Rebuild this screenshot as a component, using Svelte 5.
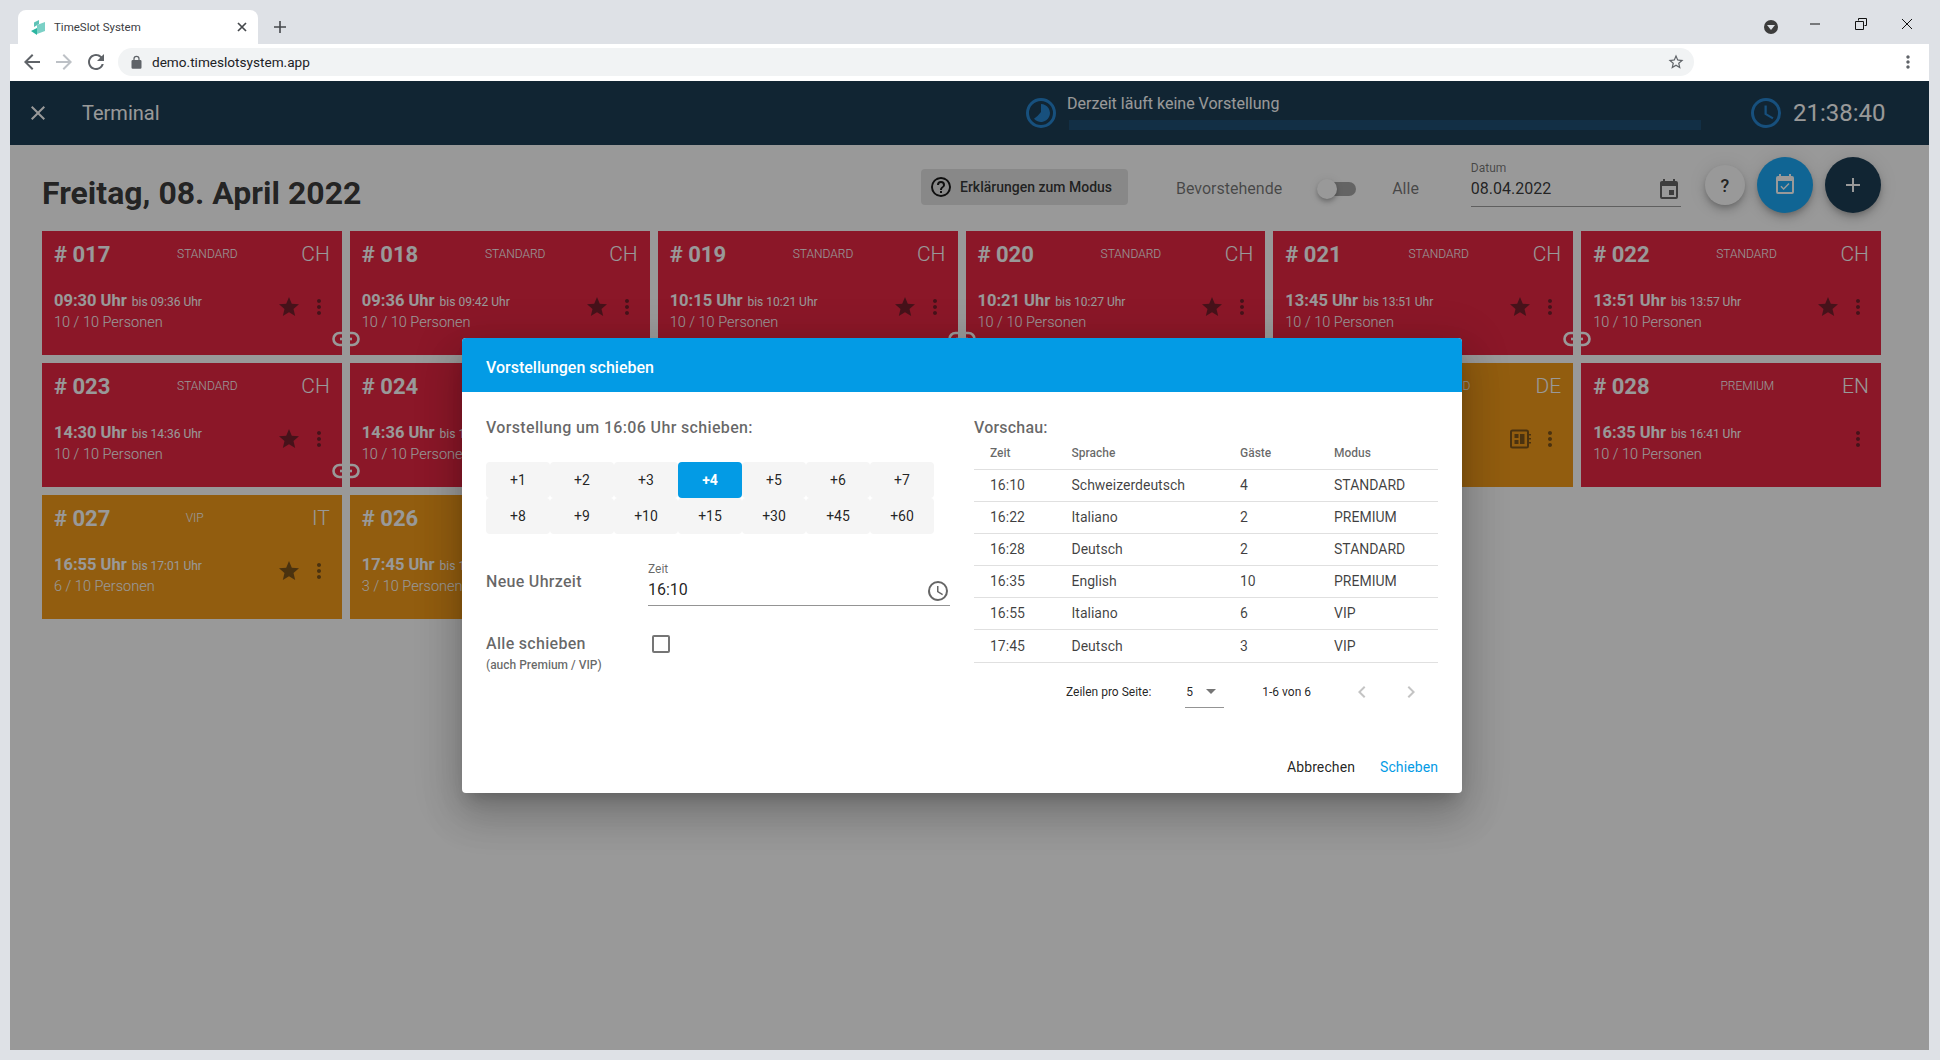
<script>
	const P = {
		star: 'M12 17.27L18.18 21l-1.64-7.03L22 9.24l-7.19-.61L12 2 9.19 8.63 2 9.24l5.46 4.73L5.82 21z',
		dots: 'M12 8c1.1 0 2-.9 2-2s-.9-2-2-2-2 .9-2 2 .9 2 2 2zm0 2c-1.1 0-2 .9-2 2s.9 2 2 2 2-.9 2-2-.9-2-2-2zm0 6c-1.1 0-2 .9-2 2s.9 2 2 2 2-.9 2-2-.9-2-2-2z',
		close: 'M19 6.41L17.59 5 12 10.59 6.41 5 5 6.41 10.59 12 5 17.59 6.41 19 12 13.41 17.59 19 19 17.59 13.41 12z',
		plus: 'M19 13h-6v6h-2v-6H5v-2h6V5h2v6h6v2z',
		calendar: 'M19 19H5V8h14m-3-7v2H8V1H6v2H5c-1.11 0-2 .89-2 2v14a2 2 0 0 0 2 2h14a2 2 0 0 0 2-2V5a2 2 0 0 0-2-2h-1V1m-1 11h-5v5h5v-5z',
		calCheck: 'M19 19H5V8h14m0-5h-1V1h-2v2H8V1H6v2H5a2 2 0 0 0-2 2v14a2 2 0 0 0 2 2h14a2 2 0 0 0 2-2V5a2 2 0 0 0-2-2m-2.47 8.06L15.47 10l-4.88 4.88-2.12-2.12-1.06 1.06L10.59 17l5.94-5.94z',
		clock: 'M12 20a8 8 0 0 0 8-8 8 8 0 0 0-8-8 8 8 0 0 0-8 8 8 8 0 0 0 8 8m0-18a10 10 0 0 1 10 10 10 10 0 0 1-10 10C6.47 22 2 17.5 2 12A10 10 0 0 1 12 2m.5 5v5.25l4.5 2.67-.75 1.23L11 13V7h1.5z',
		help: 'M11 18h2v-2h-2v2m1-16A10 10 0 0 0 2 12a10 10 0 0 0 10 10 10 10 0 0 0 10-10A10 10 0 0 0 12 2m0 18c-4.41 0-8-3.59-8-8s3.59-8 8-8 8 3.59 8 8-3.59 8-8 8m0-14a4 4 0 0 0-4 4h2a2 2 0 0 1 2-2 2 2 0 0 1 2 2c0 2-3 1.75-3 5h2c0-2.25 3-2.5 3-5a4 4 0 0 0-4-4z'
	};

	const cards = [
		{ no: '017', mode: 'STANDARD', lang: 'CH', from: '09:30', to: '09:36', count: 10, star: true, link: true },
		{ no: '018', mode: 'STANDARD', lang: 'CH', from: '09:36', to: '09:42', count: 10, star: true },
		{ no: '019', mode: 'STANDARD', lang: 'CH', from: '10:15', to: '10:21', count: 10, star: true, link: true },
		{ no: '020', mode: 'STANDARD', lang: 'CH', from: '10:21', to: '10:27', count: 10, star: true },
		{ no: '021', mode: 'STANDARD', lang: 'CH', from: '13:45', to: '13:51', count: 10, star: true, link: true },
		{ no: '022', mode: 'STANDARD', lang: 'CH', from: '13:51', to: '13:57', count: 10, star: true },
		{ no: '023', mode: 'STANDARD', lang: 'CH', from: '14:30', to: '14:36', count: 10, star: true, link: true },
		{ no: '024', mode: 'STANDARD', lang: 'CH', from: '14:36', to: '14:42', count: 10, star: true },
		{ hidden: true, orange: true },
		{ hidden: true, orange: true },
		{ no: '025', mode: 'STANDARD', lang: 'DE', from: '16:28', to: '16:34', count: 2, orange: true, notes: true },
		{ no: '028', mode: 'PREMIUM', lang: 'EN', from: '16:35', to: '16:41', count: 10 },
		{ no: '027', mode: 'VIP', lang: 'IT', from: '16:55', to: '17:01', count: 6, star: true, orange: true },
		{ no: '026', mode: 'VIP', lang: 'DE', from: '17:45', to: '17:51', count: 3, star: true, orange: true }
	];

	const steps = [1, 2, 3, 4, 5, 6, 7, 8, 9, 10, 15, 30, 45, 60];

	const rows = [
		['16:10', 'Schweizerdeutsch', '4', 'STANDARD'],
		['16:22', 'Italiano', '2', 'PREMIUM'],
		['16:28', 'Deutsch', '2', 'STANDARD'],
		['16:35', 'English', '10', 'PREMIUM'],
		['16:55', 'Italiano', '6', 'VIP'],
		['17:45', 'Deutsch', '3', 'VIP']
	];
</script>

<div class="window">
	<div class="tabstrip">
		<div class="tab">
			<svg class="favicon" viewBox="0 0 15 15" width="15" height="15">
				<path d="M3 2.500L8 0v4L3 7z" fill="#5fc3b7" />
				<path d="M6 5l8-3v9l-8 3z" fill="#7bd0c6" />
				<path d="M0 11l6-3v7z" fill="#2bb5a0" />
			</svg>
			<span class="tab-title">TimeSlot System</span>
			<svg class="tab-close" viewBox="0 0 12 12" width="12" height="12"><path d="M2 2l8 8M10 2l-8 8" stroke="#45484c" stroke-width="1.700" fill="none" /></svg>
		</div>
		<svg class="new-tab" viewBox="0 0 12 12" width="12" height="12"><path d="M6 0v12M0 6h12" stroke="#45484c" stroke-width="1.600" fill="none" /></svg>
		<div class="winctl">
			<span class="avatar"><i></i></span>
			<svg viewBox="0 0 12 12" width="12" height="12" class="ctl-min"><path d="M1 6h10" stroke="#111" fill="none" /></svg>
			<svg viewBox="0 0 12 12" width="12" height="12" class="ctl-max"><path d="M3.500 2.500V.5h8v7h-2M.5 3.500h8v8h-8z" stroke="#111" fill="none" /></svg>
			<svg viewBox="0 0 12 12" width="12" height="12" class="ctl-x"><path d="M1 1l10 10M11 1L1 11" stroke="#111" fill="none" /></svg>
		</div>
	</div>

	<div class="toolbar">
		<svg class="nav" viewBox="0 0 24 24" width="24" height="24"><path d="M20 11H7.830l5.590-5.590L12 4l-8 8 8 8 1.410-1.410L7.830 13H20z" fill="#5f6368" /></svg>
		<svg class="nav" viewBox="0 0 24 24" width="24" height="24"><path d="M4 13h12.170l-5.590 5.590L12 20l8-8-8-8-1.410 1.410L16.170 11H4z" fill="#bdc1c6" /></svg>
		<svg class="nav" viewBox="0 0 24 24" width="24" height="24"><path d="M17.650 6.350A7.958 7.958 0 0 0 12 4c-4.420 0-7.990 3.580-7.990 8s3.570 8 7.990 8c3.730 0 6.840-2.550 7.730-6h-2.080A5.990 5.990 0 0 1 12 18c-3.310 0-6-2.690-6-6s2.690-6 6-6c1.660 0 3.140.69 4.220 1.780L13 11h7V4l-2.350 2.350z" fill="#5f6368" /></svg>
		<div class="omnibox">
			<svg viewBox="0 0 24 24" width="15" height="15"><path d="M18 8h-1V6a5 5 0 0 0-10 0v2H6a2 2 0 0 0-2 2v10a2 2 0 0 0 2 2h12a2 2 0 0 0 2-2V10a2 2 0 0 0-2-2zM9 8V6a3 3 0 0 1 6 0v2z" fill="#5f6368" /></svg>
			<span class="url">demo.timeslotsystem.app</span>
			<svg class="bookmark" viewBox="0 0 24 24" width="18" height="18"><path d="M22 9.240l-7.190-.62L12 2 9.190 8.630 2 9.240l5.460 4.730L5.820 21 12 17.270 18.180 21l-1.630-7.030L22 9.240zM12 15.400l-3.760 2.270 1-4.280-3.320-2.880 4.380-.38L12 6.100l1.710 4.040 4.380.38-3.320 2.880 1 4.280L12 15.400z" fill="#5f6368" /></svg>
		</div>
		<svg class="menu" viewBox="0 0 24 24" width="20" height="20"><path d={P.dots} fill="#5f6368" /></svg>
	</div>

	<div class="viewport">
		<header class="appbar">
			<svg class="app-close" viewBox="0 0 24 24" width="24" height="24"><path d={P.close} fill="#fff" /></svg>
			<span class="app-title">Terminal</span>
			<div class="now">
				<svg viewBox="0 0 30 30" width="30" height="30">
					<circle cx="15" cy="15" r="13.500" fill="none" stroke="#0f78cc" stroke-width="3" />
					<path d="M15 6a9 9 0 1 1-7 14.700Q12 18 15 14z" fill="#0f78cc" />
				</svg>
				<div class="now-text">
					<span>Derzeit läuft keine Vorstellung</span>
					<div class="progress"></div>
				</div>
			</div>
			<svg class="time-icon" viewBox="2 2 20 20" width="30" height="30"><path d={P.clock} fill="#0f78cc" /></svg>
			<span class="time">21:38:40</span>
		</header>

		<main class="page">
			<div class="page-head">
				<h1>Freitag, 08. April 2022</h1>
				<button class="explain">
					<svg viewBox="0 0 24 24" width="24" height="24"><path d={P.help} fill="#000" /></svg>
					Erklärungen zum Modus
				</button>
				<span class="filter first">Bevorstehende</span>
				<span class="switch"><i></i></span>
				<span class="filter">Alle</span>
				<div class="date">
					<label for="datum">Datum</label>
					<div class="date-input">
						<span id="datum">08.04.2022</span>
						<svg viewBox="0 0 24 24" width="24" height="24"><path d={P.calendar} fill="#555" /></svg>
					</div>
				</div>
				<button class="round small">?</button>
				<button class="round blue"><svg viewBox="0 0 24 24" width="24" height="24"><path d={P.calCheck} fill="#fff" /></svg></button>
				<button class="round navy"><svg viewBox="0 0 24 24" width="24" height="24"><path d={P.plus} fill="#fff" /></svg></button>
			</div>

			<div class="grid">
				{#each cards as c}
					<div class="card" class:orange={c.orange}>
						{#if !c.hidden}
							<div class="card-top">
								<span class="no"># {c.no}</span>
								<span class="mode" class:vip={c.mode === 'VIP'}>{c.mode}</span>
								<span class="lang">{c.lang}</span>
							</div>
							<div class="card-body">
								<div>
									<div class="times"><b>{c.from} Uhr</b> bis {c.to} Uhr</div>
									<div class="persons">{c.count} / 10 Personen</div>
								</div>
								<div class="card-icons">
									{#if c.star}
										<svg viewBox="0 0 24 24" width="24" height="24"><path d={P.star} fill="rgba(0,0,0,.55)" /></svg>
									{/if}
									{#if c.notes}
										<svg viewBox="0 0 24 24" width="24" height="24">
											<path d="M4.500 3.500h14a1.500 1.500 0 0 1 1.500 1.500v14a1.500 1.500 0 0 1-1.500 1.500h-14A1.500 1.500 0 0 1 3 19V5a1.500 1.500 0 0 1 1.500-1.500z" fill="none" stroke="rgba(0,0,0,.55)" stroke-width="2" />
											<path d="M6.500 7h4v4h-4zM6.500 13h4v4h-4zM12 7h4.500v10H12zM21 7h2v1.500h-2zM21 11h2v1.500h-2zM21 15h2v1.500h-2z" fill="rgba(0,0,0,.55)" />
										</svg>
									{/if}
									<svg class="card-dots" viewBox="0 0 24 24" width="24" height="24"><path d={P.dots} fill="rgba(0,0,0,.55)" /></svg>
								</div>
							</div>
						{/if}
						{#if c.link}
							<svg class="link" viewBox="0 0 30 16" width="30" height="16">
								<path d="M13 2H8.500a6 6 0 0 0 0 12H13M17 2h4.500a6 6 0 0 1 0 12H17" fill="none" stroke="#fff" stroke-width="2.600" />
								<path d="M9 8h12" fill="none" stroke="#fff" stroke-width="2.600" />
							</svg>
						{/if}
					</div>
				{/each}
			</div>
		</main>

		<div class="overlay">
			<div class="dialog">
				<div class="dialog-title">Vorstellungen schieben</div>
				<div class="dialog-body">
					<section>
						<h3>Vorstellung um 16:06 Uhr schieben:</h3>
						<div class="steps">
							{#each steps as s}
								<button class="step" class:active={s === 4}>+{s}</button>
							{/each}
						</div>
						<div class="form-row new-time">
							<span class="form-label">Neue Uhrzeit</span>
							<div class="time-field">
								<span class="field-label">Zeit</span>
								<div class="field-input">
									<span>16:10</span>
									<svg viewBox="2 2 20 20" width="20" height="20"><path d={P.clock} fill="#666" /></svg>
								</div>
							</div>
						</div>
						<div class="form-row move-all">
							<div>
								<span class="form-label">Alle schieben</span>
								<small>(auch Premium / VIP)</small>
							</div>
							<span class="checkbox"></span>
						</div>
					</section>
					<section>
						<h3 class="preview">Vorschau:</h3>
						<table>
							<colgroup>
								<col style="width:81.5px" />
								<col style="width:168.5px" />
								<col style="width:94px" />
								<col />
							</colgroup>
							<thead>
								<tr>
									<th>Zeit</th>
									<th>Sprache</th>
									<th>Gäste</th>
									<th>Modus</th>
								</tr>
							</thead>
							<tbody>
								{#each rows as r}
									<tr>
										{#each r as cell}
											<td>{cell}</td>
										{/each}
									</tr>
								{/each}
							</tbody>
						</table>
						<div class="pager">
							<span>Zeilen pro Seite:</span>
							<span class="per-page">5<i></i></span>
							<span class="range">1-6 von 6</span>
							<svg viewBox="0 0 24 24" width="24" height="24"><path d="M15.410 7.410L14 6l-6 6 6 6 1.410-1.410L10.830 12z" fill="#c4c4c4" /></svg>
							<svg class="next" viewBox="0 0 24 24" width="24" height="24"><path d="M10 6L8.590 7.410 13.170 12l-4.580 4.590L10 18l6-6z" fill="#c4c4c4" /></svg>
						</div>
					</section>
				</div>
				<div class="dialog-actions">
					<button class="text-btn">Abbrechen</button>
					<button class="text-btn primary">Schieben</button>
				</div>
			</div>
		</div>
	</div>
</div>

<style>
	:global(body) {
		margin: 0;
		font-family: Roboto, "Liberation Sans", sans-serif;
	}

	button {
		font-family: inherit;
		border: 0;
		padding: 0;
		cursor: pointer;
	}

	.window {
		width: 1940px;
		height: 1060px;
		background: #dee1e6;
		display: flex;
		flex-direction: column;
		overflow: hidden;
	}

	/* browser chrome */
	.tabstrip {
		height: 44px;
		flex: none;
		display: flex;
		align-items: flex-end;
	}

	.tab {
		margin-left: 18px;
		width: 240px;
		height: 34px;
		box-sizing: border-box;
		background: #fff;
		border-radius: 8px 8px 0 0;
		display: flex;
		align-items: center;
		padding-left: 13px;
	}

	.favicon {
		flex: none;
	}

	.tab-title {
		margin-left: 8px;
		font-size: 11.500px;
		color: #3c4043;
		flex: 1;
	}

	.tab-close {
		margin-right: 10px;
	}

	.new-tab {
		margin: 0 0 11px 16px;
	}

	.winctl {
		margin-left: auto;
		align-self: flex-start;
		display: flex;
		align-items: flex-start;
		padding-top: 18px;
	}

	.avatar {
		width: 14px;
		height: 14px;
		margin: 2px 31px 0 0;
		border-radius: 50%;
		background: #3c3c3c;
		display: flex;
		align-items: center;
		justify-content: center;
	}

	.avatar i {
		border: 4px solid transparent;
		border-top: 5px solid #dee1e6;
		border-bottom: 0;
	}

	.ctl-min {
		margin-right: 34px;
	}

	.ctl-max {
		margin-right: 34px;
	}

	.ctl-x {
		margin-right: 27px;
	}

	.toolbar {
		height: 37px;
		margin-left: 10px;
		width: 1919px;
		background: #fff;
		display: flex;
		align-items: center;
		flex: none;
		box-sizing: border-box;
		padding: 0 0 1px 10px;
	}

	.nav {
		margin-right: 8px;
	}

	.omnibox {
		margin-left: 2px;
		width: 1576px;
		height: 28px;
		box-sizing: border-box;
		background: #f1f3f4;
		border-radius: 14px;
		display: flex;
		align-items: center;
		padding: 0 9px 0 11px;
	}

	.url {
		margin-left: 8px;
		font-size: 13.600px;
		color: #202124;
		flex: 1;
	}

	.menu {
		margin-left: 204px;
	}

	/* app */
	.viewport {
		position: relative;
		margin: 0 11px 10px 10px;
		flex: 1;
		background: #fff;
		overflow: hidden;
	}

	.appbar {
		height: 64px;
		background: #042943;
		color: #fff;
		display: flex;
		align-items: center;
	}

	.app-close {
		margin-left: 16px;
	}

	.app-title {
		margin-left: 32px;
		font-size: 20px;
		font-weight: 400;
		width: 944px;
		white-space: nowrap;
	}

	.now {
		display: flex;
		align-items: center;
		gap: 13px;
		flex: none;
	}

	.now-text {
		display: flex;
		flex-direction: column;
		font-size: 16px;
		height: 40px;
	}

	.now-text span {
		line-height: 22px;
		margin-left: -2px;
	}

	.progress {
		margin-top: 5px;
		width: 632px;
		height: 10px;
		background: #073b64;
	}

	.time-icon {
		margin-left: 50px;
	}

	.time {
		margin-left: 12px;
		font-size: 24px;
	}

	.page {
		padding: 12px 48px 0 32px;
	}

	.page-head {
		display: flex;
		align-items: center;
		height: 56px;
		padding-bottom: 18px;
	}

	h1 {
		margin: 0;
		font-size: 32px;
		font-weight: 700;
		color: rgba(0, 0, 0, .87);
		line-height: 40px;
		width: 879px;
		padding-top: 16px;
		white-space: nowrap;
	}

	.explain {
		width: 207px;
		height: 36px;
		flex: none;
		box-sizing: border-box;
		border-radius: 4px;
		background: #e0e0e0;
		display: flex;
		align-items: center;
		padding-left: 8px;
		gap: 7px;
		font-size: 14px;
		font-weight: 500;
		color: rgba(0, 0, 0, .87);
		margin-top: 4px;
	}

	.filter {
		font-size: 16px;
		color: rgba(0, 0, 0, .6);
		margin-top: 6px;
	}

	.first {
		margin-left: 48px;
	}

	.switch {
		position: relative;
		width: 36px;
		height: 14px;
		margin: 8px 36px 0 38px;
		border-radius: 7px;
		background: rgba(0, 0, 0, .38);
		flex: none;
	}

	.switch i {
		position: absolute;
		left: -3px;
		top: -3px;
		width: 20px;
		height: 20px;
		border-radius: 50%;
		background: #fff;
		box-shadow: 0 2px 4px -1px rgba(0, 0, 0, .2), 0 4px 5px rgba(0, 0, 0, .14), 0 1px 10px rgba(0, 0, 0, .12);
	}

	.date {
		margin-left: 52px;
		width: 210px;
		flex: none;
		margin-bottom: 2px;
	}

	.date label {
		display: block;
		font-size: 12px;
		line-height: 12px;
		color: rgba(0, 0, 0, .6);
	}

	.date-input {
		display: flex;
		align-items: center;
		justify-content: space-between;
		height: 32px;
		border-bottom: 1px solid rgba(0, 0, 0, .42);
		font-size: 16px;
		color: rgba(0, 0, 0, .87);
	}

	.date-input span {
		margin-bottom: 2px;
	}

	.round {
		flex: none;
		border-radius: 50%;
		display: flex;
		align-items: center;
		justify-content: center;
		box-shadow: 0 3px 5px -1px rgba(0, 0, 0, .2), 0 6px 10px rgba(0, 0, 0, .14), 0 1px 18px rgba(0, 0, 0, .12);
		width: 56px;
		height: 56px;
	}

	.small {
		width: 40px;
		height: 40px;
		margin-left: 24px;
		background: #fff;
		font-size: 18px;
		font-weight: 500;
		color: rgba(0, 0, 0, .87);
	}

	.blue {
		margin-left: 12px;
		background: #03a0f5;
	}

	.navy {
		margin-left: 12px;
		background: #042943;
	}

	.grid {
		display: grid;
		grid-template-columns: repeat(6, 1fr);
		gap: 8px;
	}

	.card {
		position: relative;
		height: 124px;
		box-sizing: border-box;
		padding: 13px 12px 0 12px;
		background: #e5102f;
		color: #fff;
	}

	.orange {
		background: #f29000;
	}

	.card-top {
		display: flex;
		align-items: center;
		justify-content: space-between;
		height: 20px;
	}

	.no {
		font-size: 22px;
		font-weight: 700;
		white-space: nowrap;
	}

	.mode {
		font-size: 12px;
		font-weight: 300;
		margin-left: 3px;
	}

	.vip {
		margin-right: 36px;
	}

	.lang {
		font-size: 21px;
		font-weight: 300;
	}

	.card-body {
		margin-top: 27px;
		display: flex;
		justify-content: space-between;
		align-items: flex-start;
	}

	.times {
		font-size: 12px;
		line-height: 20px;
		white-space: nowrap;
	}

	.times b {
		font-size: 16.500px;
		font-weight: 700;
		margin-right: 2px;
	}

	.persons {
		margin-top: 1px;
		font-size: 14.500px;
		line-height: 20px;
		font-weight: 300;
		white-space: nowrap;
	}

	.card-icons {
		display: flex;
		align-items: center;
		margin: 4px -1px 0 0;
		flex: none;
	}

	.card-dots {
		margin-left: 6px;
	}

	.link {
		position: absolute;
		right: -19px;
		top: 100px;
		z-index: 1;
	}

	/* dialog */
	.overlay {
		position: absolute;
		inset: 0;
		background: rgba(33, 33, 33, .46);
		display: flex;
		align-items: center;
		justify-content: center;
		padding-right: 15px;
		z-index: 2;
	}

	.dialog {
		width: 1000px;
		height: 455px;
		background: #fff;
		border-radius: 4px;
		display: flex;
		flex-direction: column;
		overflow: hidden;
		flex: none;
		box-shadow: 0 11px 15px -7px rgba(0, 0, 0, .2), 0 24px 38px 3px rgba(0, 0, 0, .14), 0 9px 46px 8px rgba(0, 0, 0, .12);
	}

	.dialog-title {
		height: 54px;
		flex: none;
		background: #039be5;
		color: #fff;
		font-size: 16px;
		font-weight: 500;
		line-height: 60px;
		padding: 0 24px;
		overflow: hidden;
	}

	.dialog-body {
		flex: 1;
		display: grid;
		grid-template-columns: 464px 464px;
		gap: 24px;
		padding: 25px 24px 0;
		font-size: 14px;
	}

	h3 {
		margin: 0;
		font-size: 16px;
		line-height: 22px;
		font-weight: 500;
		letter-spacing: .35px;
		color: rgba(0, 0, 0, .6);
	}

	.preview {
		letter-spacing: .2px;
	}

	.steps {
		margin-top: 23px;
		display: grid;
		grid-template-columns: repeat(7, 64px);
		grid-auto-rows: 36px;
	}

	.step {
		background: #f5f5f5;
		border-radius: 4px;
		font-size: 14px;
		font-weight: 400;
		color: rgba(0, 0, 0, .87);
	}

	.active {
		background: #039be5;
		color: #fff;
		font-weight: 700;
	}

	.form-row {
		display: flex;
	}

	.form-label {
		display: block;
		font-size: 16px;
		font-weight: 500;
		line-height: 22px;
		color: rgba(0, 0, 0, .6);
		letter-spacing: .3px;
	}

	.new-time {
		margin-top: 26px;
	}

	.new-time .form-label {
		width: 162px;
		margin-top: 11px;
	}

	.time-field {
		flex: 1;
	}

	.field-label {
		display: block;
		font-size: 12px;
		line-height: 14px;
		color: rgba(0, 0, 0, .6);
		margin-top: 2px;
	}

	.field-input {
		display: flex;
		align-items: center;
		justify-content: space-between;
		height: 30px;
		box-sizing: border-box;
		border-bottom: 1px solid rgba(0, 0, 0, .42);
		font-size: 16px;
		color: rgba(0, 0, 0, .87);
		padding-right: 2px;
	}

	.field-input span {
		margin-bottom: 3px;
	}

	.move-all {
		margin-top: 27px;
	}

	.move-all > div {
		width: 166px;
	}

	small {
		display: block;
		margin-top: 3px;
		font-size: 12px;
		line-height: 14px;
		font-weight: 500;
		color: rgba(0, 0, 0, .6);
	}

	.checkbox {
		width: 18px;
		height: 18px;
		box-sizing: border-box;
		border: 2px solid rgba(0, 0, 0, .54);
		border-radius: 2px;
		margin-top: 2px;
	}

	table {
		width: 100%;
		border-collapse: collapse;
		table-layout: fixed;
		margin-top: -2px;
	}

	th {
		height: 32px;
		text-align: left;
		padding: 0 0 0 16px;
		font-size: 12px;
		font-weight: 500;
		color: rgba(0, 0, 0, .6);
		border-bottom: 1px solid #e0e0e0;
	}

	td {
		height: 29px;
		padding: 0 0 2px 16px;
		font-size: 14px;
		color: rgba(0, 0, 0, .75);
		border-bottom: 1px solid #e0e0e0;
	}

	tr:last-child td {
		height: 32px;
		padding-bottom: 0;
	}

	.pager {
		display: flex;
		align-items: center;
		justify-content: flex-end;
		height: 44px;
		margin-top: 7px;
		padding-right: 15px;
		font-size: 12px;
		color: rgba(0, 0, 0, .87);
	}

	.per-page {
		margin-left: 34px;
		width: 39px;
		height: 32px;
		box-sizing: border-box;
		border-bottom: 1px solid rgba(0, 0, 0, .42);
		display: flex;
		align-items: center;
		justify-content: space-between;
		padding: 0 8px 0 1px;
	}

	.per-page i {
		border: 5px solid transparent;
		border-top: 5px solid rgba(0, 0, 0, .54);
		border-bottom: 0;
	}

	.range {
		margin: 0 39px 0 38px;
	}

	.next {
		margin-left: 25px;
	}

	.dialog-actions {
		flex: none;
		display: flex;
		justify-content: flex-end;
		gap: 25px;
		padding: 0 24px 8px;
	}

	.text-btn {
		height: 36px;
		background: none;
		font-size: 14px;
		font-weight: 400;
		letter-spacing: .1px;
		color: rgba(0, 0, 0, .87);
	}

	.primary {
		color: #039be5;
	}
</style>
